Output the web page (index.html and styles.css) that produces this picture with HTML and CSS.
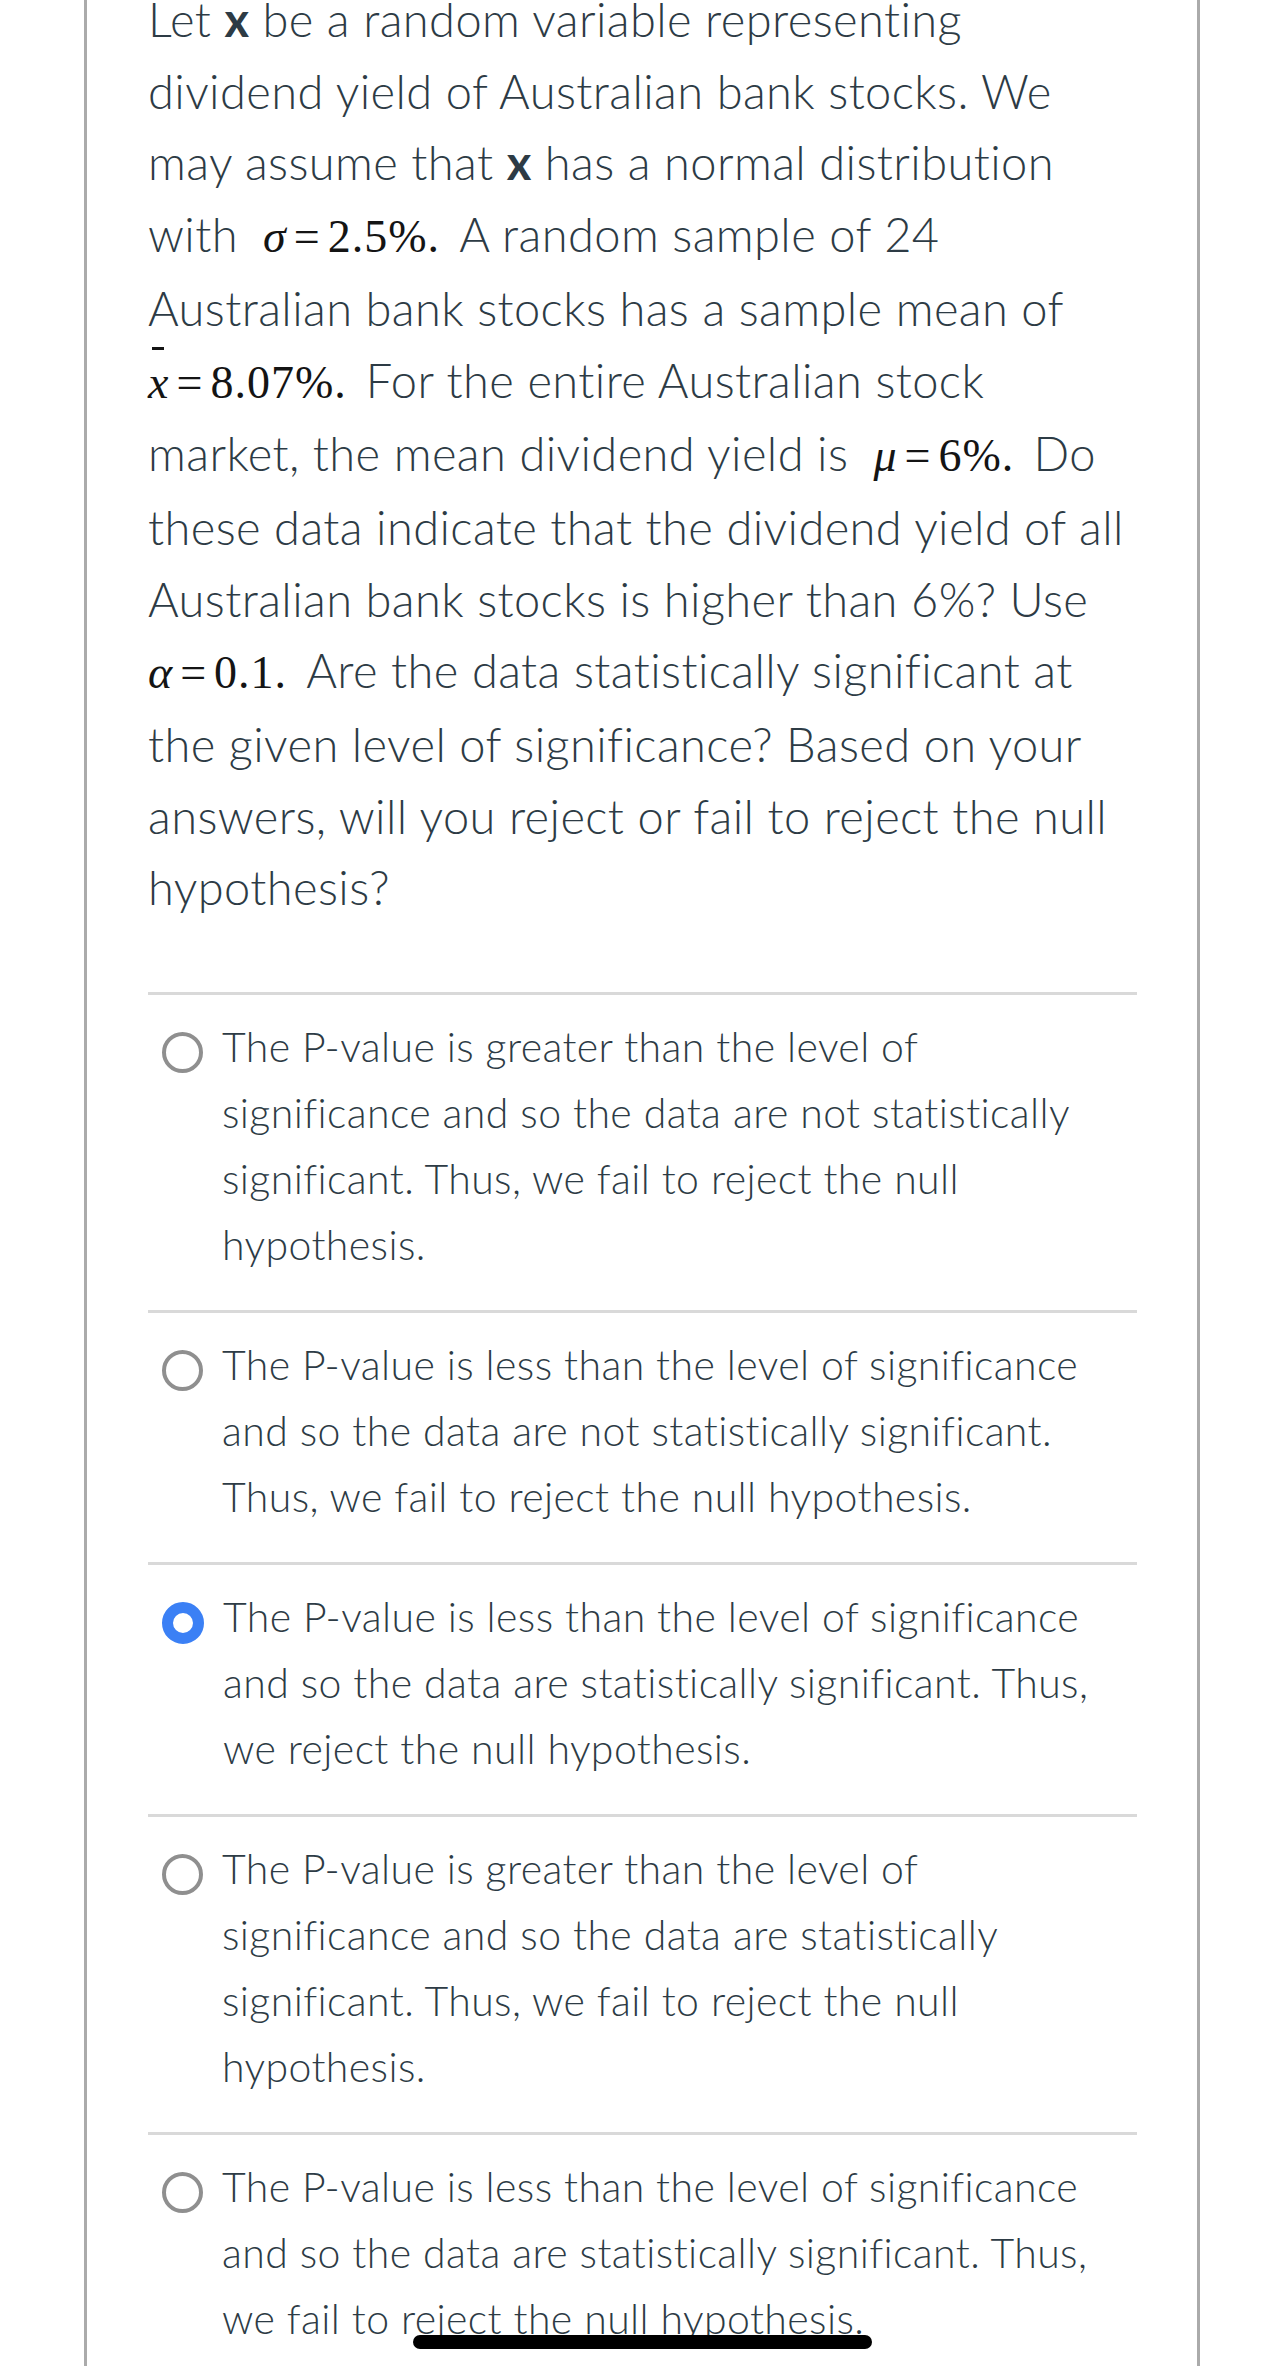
FILE: index.html
```html
<!DOCTYPE html>
<html lang="en">
<head>
<meta charset="utf-8">
<title>Quiz question</title>
<link rel="stylesheet" href="styles.css">
</head>
<body>
<div class="frame">
  <div class="question">
    <p class="stem">Let <b>x</b> be a random variable representing<br>
dividend yield of Australian bank stocks. We<br>
may assume that <b>x</b> has a normal distribution<br>
with <span class="math lead"><i>σ</i><span class="eq">=</span>2.5%.</span> A random sample of 24<br>
Australian bank stocks has a sample mean of<br>
<span class="math"><i class="bar">x</i><span class="eq">=</span>8.07%.</span> For the entire Australian stock<br>
market, the mean dividend yield is <span class="math lead"><i>μ</i><span class="eq">=</span>6%.</span> Do<br>
these data indicate that the dividend yield of all<br>
Australian bank stocks is higher than 6%? Use<br>
<span class="math"><i>α</i><span class="eq">=</span>0.1.</span> Are the data statistically significant at<br>
the given level of significance? Based on your<br>
answers, will you reject or fail to reject the null<br>
hypothesis?</p>

    <ul class="answers">
      <li class="answer">
        <span class="radio"></span>
        <span class="label">The P-value is greater than the level of<br>significance and so the data are not statistically<br>significant. Thus, we fail to reject the null<br>hypothesis.</span>
      </li>
      <li class="answer">
        <span class="radio"></span>
        <span class="label">The P-value is less than the level of significance<br>and so the data are not statistically significant.<br>Thus, we fail to reject the null hypothesis.</span>
      </li>
      <li class="answer">
        <span class="radio checked"></span>
        <span class="label">The P-value is less than the level of significance<br>and so the data are statistically significant. Thus,<br>we reject the null hypothesis.</span>
      </li>
      <li class="answer">
        <span class="radio"></span>
        <span class="label">The P-value is greater than the level of<br>significance and so the data are statistically<br>significant. Thus, we fail to reject the null<br>hypothesis.</span>
      </li>
      <li class="answer">
        <span class="radio"></span>
        <span class="label">The P-value is less than the level of significance<br>and so the data are statistically significant. Thus,<br>we fail to reject the null hypothesis.</span>
      </li>
    </ul>
  </div>
</div>
<div class="home-indicator"></div>
</body>
</html>
```

FILE: styles.css
```css
html, body {
  margin: 0;
  padding: 0;
  background: #ffffff;
}

body {
  font-family: "Lato", "Noto Sans", sans-serif;
  font-weight: 300;
  color: #2d3b45;
  height: 2366px;
  overflow: hidden;
  position: relative;
}

.frame {
  margin: 4px 0 0 84px;
  width: 1110px;
  min-height: 2400px;
  border-left: 3px solid #ababab;
  border-right: 3px solid #ababab;
}

.question {
  padding: 0 60px 0 61px;
}

.stem {
  margin: -20px 0 0 0;
  font-size: 47px;
  letter-spacing: 0.4px;
  line-height: 71.7px;
  white-space: nowrap;
}

.stem b {
  font-weight: 700;
}

.math {
  font-family: "Liberation Serif", "Times New Roman", serif;
  font-weight: 400;
  font-size: 46px;
  letter-spacing: 1px;
  color: #141414;
  padding-right: 6px;
}

.math.lead {
  margin-left: 12px;
}

.math i {
  font-style: italic;
}

.math .eq {
  margin: 0 7px;
}

.math .bar {
  position: relative;
  display: inline-block;
}

.math .bar::before {
  content: "";
  position: absolute;
  left: 4px;
  right: 5px;
  top: 0px;
  border-top: 3px solid #141414;
}

.answers {
  list-style: none;
  margin: 68px 0 0 0;
  padding: 0;
}

.answer {
  display: flex;
  align-items: flex-start;
  gap: 19px;
  border-top: 3px solid #d9d9d9;
  padding: 19px 0 32px 14px;
  font-size: 41px;
  letter-spacing: 0.4px;
  line-height: 66px;
  white-space: nowrap;
}

.radio {
  flex: none;
  width: 33px;
  height: 33px;
  margin-top: 18px;
  border: 4px solid #8f8f8f;
  border-radius: 50%;
  background: #fff;
}

.radio.checked {
  width: 20px;
  height: 20px;
  border: 11px solid #3b80f5;
}

.label {
  flex: 1;
}

.home-indicator {
  position: absolute;
  left: 413px;
  top: 2335px;
  width: 459px;
  height: 14px;
  border-radius: 7px;
  background: #000;
}
```
